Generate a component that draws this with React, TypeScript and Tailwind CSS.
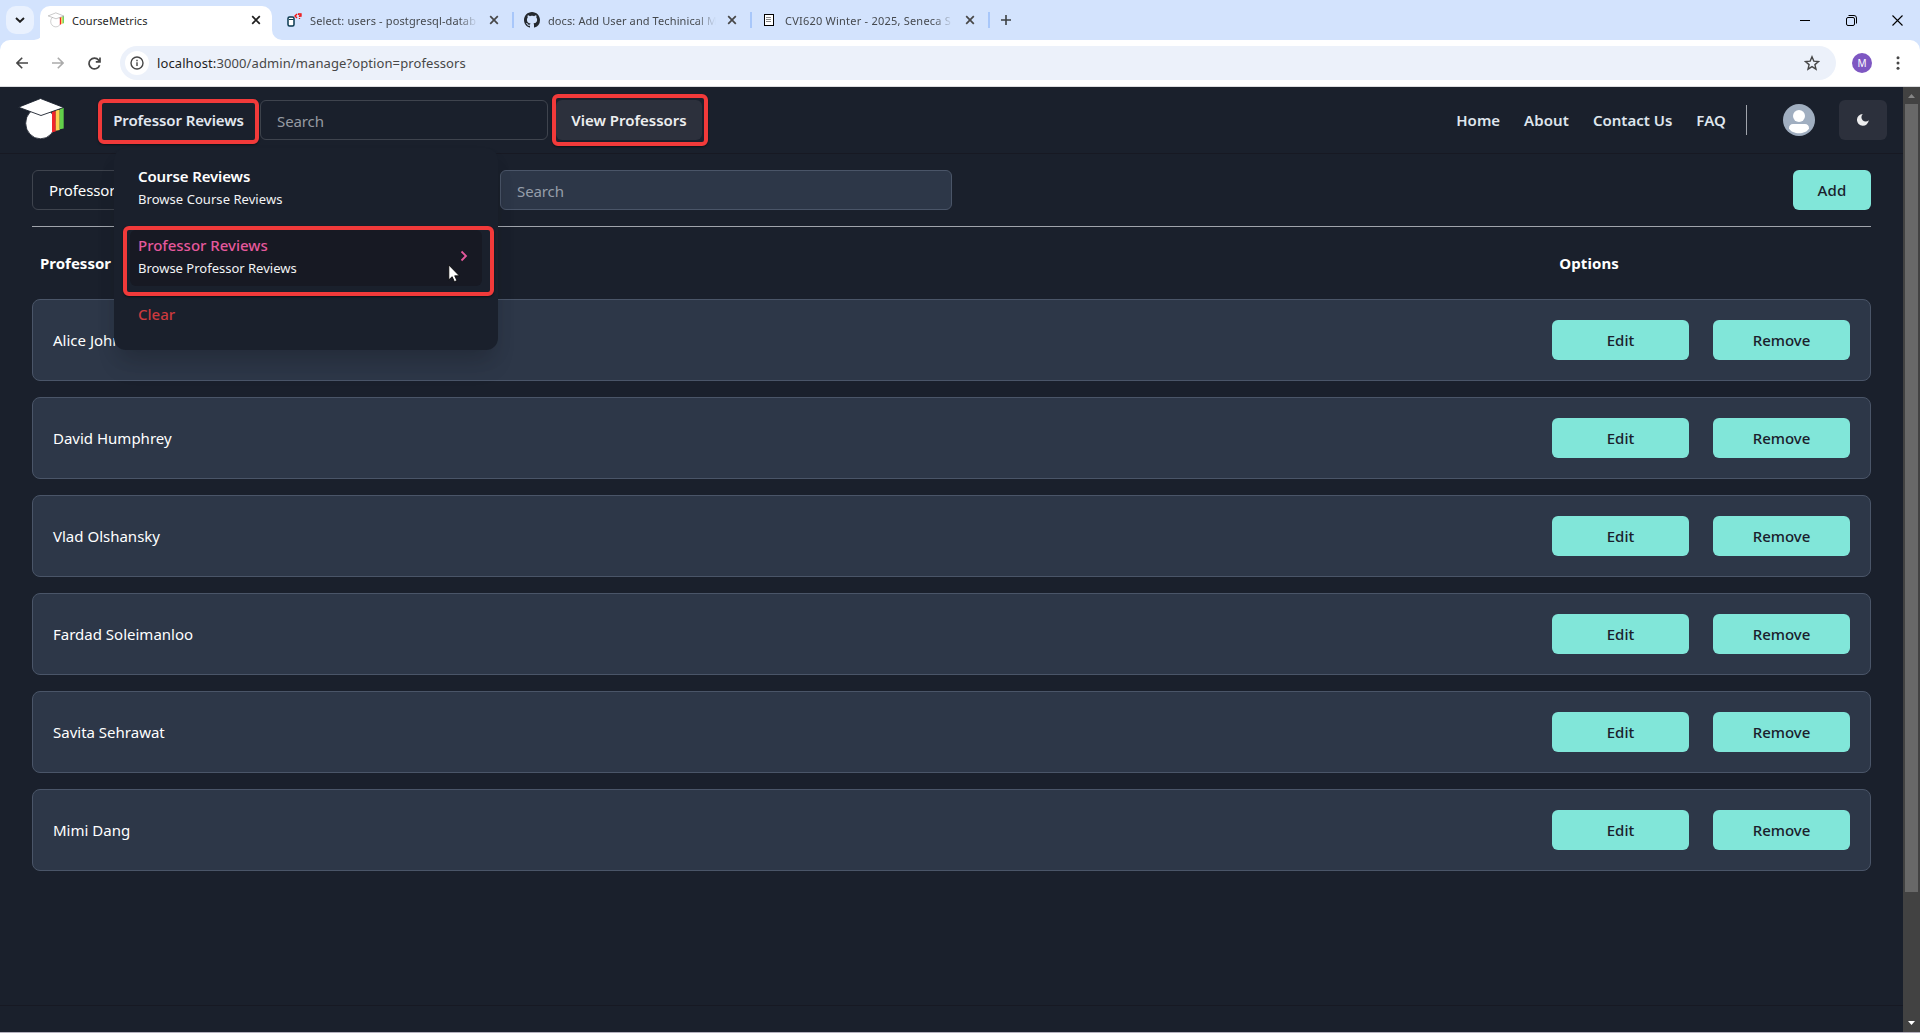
import { type ReactNode } from "react";

const professors = [
  "Alice Johnson",
  "David Humphrey",
  "Vlad Olshansky",
  "Fardad Soleimanloo",
  "Savita Sehrawat",
  "Mimi Dang",
];

function CloseIcon({ className = "" }: { className?: string }) {
  return (
    <svg viewBox="0 0 10 10" className={`h-2.5 w-2.5 shrink-0 ${className}`} fill="none" stroke="currentColor" strokeWidth="1.7">
      <path d="M1.2 1.2 8.8 8.8M8.8 1.2 1.2 8.8" />
    </svg>
  );
}

function CapLogo({ className, outline }: { className: string; outline: string }) {
  return (
    <svg viewBox="0 0 46 42" className={className}>
      <ellipse cx="22.500" cy="25.200" rx="14.800" ry="15.600" fill="#fff" stroke={outline} strokeWidth="0.8" />
      <path d="M34 13h3.700v20.600l-3.700.6z" fill="#f0252b" />
      <path d="M37.700 12h4v20l-4 .8z" fill="#fbd04f" />
      <path d="M41.700 10h4v20.500l-4 .8z" fill="#62d04a" />
      <path d="M.5 9.200 22.500 .5 45.700 9.500 23 17.500z" fill="#fff" stroke={outline} strokeWidth="0.9" />
    </svg>
  );
}

function DatabaseIcon() {
  return (
    <svg viewBox="0 0 16 16" className="h-4 w-4 shrink-0" fill="none">
      <rect x="2" y="5" width="6" height="9" rx="1.500" fill="#fff" stroke="#0b3a50" strokeWidth="1.500" />
      <path d="M3 7.500h4.500" stroke="#0b3a50" />
      <path d="M11 2 9 4l2 2" stroke="#e11" strokeWidth="1.400" />
      <path d="M12.500 3V2H15v2h-1.500v1M13.500 6v1" stroke="#e11" strokeWidth="1.300" />
    </svg>
  );
}

function GithubIcon() {
  return (
    <svg viewBox="0 0 16 16" className="h-4 w-4 shrink-0" fill="#24292f">
      <path d="M8 0C3.580 0 0 3.580 0 8c0 3.540 2.290 6.530 5.470 7.590.4.070.55-.17.55-.38 0-.19-.01-.82-.01-1.490-2.010.37-2.530-.49-2.690-.94-.09-.23-.48-.94-.82-1.130-.28-.15-.68-.52-.01-.53.63-.01 1.080.58 1.230.82.72 1.210 1.870.87 2.330.66.07-.52.28-.87.51-1.070-1.780-.2-3.640-.89-3.640-3.950 0-.87.31-1.590.82-2.150-.08-.2-.36-1.020.08-2.120 0 0 .67-.21 2.200.82.64-.18 1.320-.27 2-.27s1.360.09 2 .27c1.530-1.040 2.200-.82 2.200-.82.44 1.100.16 1.920.08 2.120.51.56.82 1.270.82 2.150 0 3.070-1.870 3.750-3.650 3.950.29.25.54.73.54 1.480 0 1.070-.01 1.930-.01 2.200 0 .21.15.46.55.38A8.010 8.010 0 0 0 16 8c0-4.420-3.580-8-8-8Z" />
    </svg>
  );
}

function DocumentIcon() {
  return (
    <svg viewBox="0 0 12 14" className="h-3.5 w-3 shrink-0" shapeRendering="crispEdges">
      <rect x="1" y="1" width="9" height="11" fill="#fff" stroke="#000" />
      <path d="M3 4.500h5M3 6.500h5M3 8.500h5" stroke="#888" />
    </svg>
  );
}

function InactiveTab({ icon, title, className, titleClass }: { icon: ReactNode; title: string; className: string; titleClass: string }) {
  return (
    <div className={`flex h-full shrink-0 items-center ${className}`}>
      <span className="flex w-4 shrink-0 justify-center">{icon}</span>
      <span
        className={`ml-2 w-[170px] whitespace-nowrap pt-0.5 text-[11px] text-[#45494e] [mask-image:linear-gradient(to_right,#000_148px,transparent_168px)] ${titleClass}`}
      >
        {title}
      </span>
      <CloseIcon className="ml-auto mr-[13px] text-[#474747]" />
      <span className="h-4 w-0.5 bg-[#a8c7fa]" />
    </div>
  );
}

function BrowserChrome() {
  return (
    <div className="shrink-0 bg-[#d3e3fd]">
      <div className="flex h-10 items-center">
        <div className="ml-1.5 flex h-7 w-7 items-center justify-center rounded-[10px] bg-[#e9f1fe]">
          <svg viewBox="0 0 10 6" className="h-1.5 w-2.5" fill="none" stroke="#1f1f1f" strokeWidth="1.900">
            <path d="m1 1 4 3.800L9 1" />
          </svg>
        </div>
        <svg viewBox="0 0 10 10" className="mt-auto -mr-1 h-2.5 w-2.5 shrink-0 fill-white">
          <path d="M0 10A10 10 0 0 0 10 0v10z" />
        </svg>
        <div className="mt-1.5 flex h-[34px] w-[232px] shrink-0 items-center rounded-t-[10px] bg-white pb-1.5">
          <CapLogo className="ml-2 h-4 w-4 shrink-0" outline="#555" />
          <span className="ml-2 pt-0.5 text-[11px] tracking-[0.08px] text-[#1f1f1f]">CourseMetrics</span>
          <CloseIcon className="ml-auto mr-[11px] text-[#1f1f1f]" />
        </div>
        <svg viewBox="0 0 10 10" className="mt-auto h-2.5 w-2.5 shrink-0 fill-white">
          <path d="M10 10A10 10 0 0 1 0 0v10z" />
        </svg>
        <InactiveTab icon={<DatabaseIcon />} title="Select: users - postgresql-datab" className="ml-1 w-[228px]" titleClass="tracking-[0.13px]" />
        <InactiveTab icon={<GithubIcon />} title="docs: Add User and Techinical M" className="ml-2.5 w-[228px]" titleClass="tracking-[0.1px]" />
        <InactiveTab icon={<DocumentIcon />} title="CVI620 Winter - 2025, Seneca S" className="ml-[9px] w-[229px]" titleClass="tracking-[0.22px]" />
        <svg viewBox="0 0 10 10" className="ml-[11px] h-2.5 w-2.5" stroke="#3c4043" strokeWidth="1.600">
          <path d="M5 0v10M0 5h10" />
        </svg>
        <div className="ml-auto mr-[17px] flex items-center text-black">
          <svg viewBox="0 0 10 10" className="h-2.5 w-2.5" stroke="currentColor">
            <path d="M0 5.500h10" />
          </svg>
          <svg viewBox="0 0 11 11" className="ml-9 h-[11px] w-[11px]" fill="none" stroke="currentColor">
            <rect x=".5" y="2.500" width="8" height="8" rx="1.500" />
            <path d="M2.500.5H8A2.500 2.500 0 0 1 10.500 3v5.500" />
          </svg>
          <svg viewBox="0 0 11 11" className="ml-[35px] h-[11px] w-[11px]" stroke="currentColor" strokeWidth="1.100">
            <path d="m.5.5 10 10M10.500.5l-10 10" />
          </svg>
        </div>
      </div>
      <div className="flex h-[47px] items-center rounded-t-[10px] border-b border-[#dcdde0] bg-white">
        <svg viewBox="0 0 12 12" className="ml-4 h-3 w-3" fill="none" stroke="#474747" strokeWidth="1.600">
          <path d="M12 6H1M6.200.8 1 6l5.200 5.200" />
        </svg>
        <svg viewBox="0 0 12 12" className="ml-6 h-3 w-3" fill="none" stroke="#ababab" strokeWidth="1.600">
          <path d="M0 6h11M5.800.8 11 6l-5.200 5.200" />
        </svg>
        <svg viewBox="0 0 13 13" className="ml-6 h-[13px] w-[13px]" fill="none" stroke="#474747" strokeWidth="1.700">
          <path d="M11.600 8.200A5.400 5.400 0 1 1 10.700 3.200L12 4.500M12 .4v4.400H7.800" />
        </svg>
        <div className="ml-[19px] flex h-[34px] w-[1716px] items-center rounded-full bg-[#ecf1fa]">
          <div className="ml-[5px] flex h-6 w-6 items-center justify-center rounded-full bg-white">
            <svg viewBox="0 0 14 14" className="h-3.5 w-3.5" fill="none" stroke="#474747" strokeWidth="1.400">
              <circle cx="7" cy="7" r="6" />
              <path d="M7 6.200V10M7 3.800v1.400" />
            </svg>
          </div>
          <span className="ml-2 pt-px text-[13px] tracking-[0.1px] text-[#474747]">
            <span className="text-[#1f1f1f]">localhost:</span>3000/admin/manage?option=professors
          </span>
          <svg viewBox="0 0 16 16" className="ml-auto mr-4 h-4 w-4" fill="none" stroke="#474747" strokeWidth="1.400">
            <path d="m8 1.800 1.800 4.300 4.700.4-3.600 3.100 1.100 4.600L8 11.700l-4 2.500 1.100-4.600L1.500 6.500l4.700-.4z" />
          </svg>
        </div>
        <div className="ml-4 flex h-5 w-5 items-center justify-center rounded-full bg-[#7e57c2] text-[10px] text-white">M</div>
        <svg viewBox="0 0 4 14" className="ml-6 h-3.5 w-1" fill="#474747">
          <circle cx="2" cy="1.700" r="1.500" />
          <circle cx="2" cy="7" r="1.500" />
          <circle cx="2" cy="12.300" r="1.500" />
        </svg>
      </div>
    </div>
  );
}

function ReviewsMenu() {
  return (
    <div className="absolute left-[34px] top-[49px] z-20 h-[202px] w-96 rounded-xl bg-[#1a202c] shadow-[0_20px_25px_-5px_rgba(0,0,0,0.1),0_10px_20px_-5px_rgba(0,0,0,0.12)]">
      <div className="flex flex-col px-4 pt-4">
        <div className="h-[62px] px-2 font-semibold leading-6 text-white">
          <p className="-tracking-[0.12px]">Course Reviews</p>
          <p className="text-[13px] font-normal leading-[22px] tracking-[0.05px] text-[#f2f3f5]">Browse Course Reviews</p>
        </div>
        <div className="relative mt-1 flex h-14 items-center rounded-md bg-[#171923] px-2">
          <div className="-mt-[5px]">
            <p className="font-medium leading-6 text-[#e5589c]">Professor Reviews</p>
            <p className="text-[13px] leading-[22px] text-[#f2f3f5]">Browse Professor Reviews</p>
          </div>
          <svg viewBox="0 0 8 12" className="-mt-[5px] ml-auto mr-1.5 h-3 w-2" fill="none" stroke="#e5589c" strokeWidth="1.800">
            <path d="m1.500 1.500 4.500 4.500-4.500 4.500" />
          </svg>
          <div className="absolute -left-[7px] -top-1 h-[70px] w-[371px] rounded-md border-4 border-[#f23a3a] shadow-[0_1px_2px_rgba(0,0,0,0.5)]" />
          <svg viewBox="0 0 12 19" className="absolute left-[318px] top-[34px] h-[19px] w-3" fill="#fff" stroke="#000" strokeWidth=".8">
            <path d="M.8 1v14.800l3.400-3.100 2.200 5 2.500-1.100-2.200-4.800h4.600z" />
          </svg>
        </div>
        <div className="mt-4 px-2 font-medium leading-6 text-[#cb3a3e]">Clear</div>
      </div>
    </div>
  );
}

function Header() {
  return (
    <header className="flex h-[67px] shrink-0 items-center border-b border-[#171923] pl-[18px] pr-4">
      <CapLogo className="mb-0.5 h-[42px] w-[46px]" outline="#1a202c" />
      <div className="relative ml-[34px] mt-[3px] flex h-[45px] w-[161px] items-center justify-center rounded-md border-4 border-[#f23a3a] font-semibold text-[#e2e8f0] -tracking-[0.1px] shadow-[0_1px_2px_rgba(0,0,0,0.5)]">
        <span className="-mt-[3px]">Professor Reviews</span>
        <div className="absolute -left-[22px] -top-[4px] font-normal tracking-normal">
          <ReviewsMenu />
        </div>
      </div>
      <div className="ml-px flex h-10 w-[288px] items-center rounded-md border border-[#3f444e] pl-4 pt-0.5 text-[#969aa2] -tracking-[0.1px]">Search</div>
      <div className="ml-1 flex h-[52px] w-[156px] items-center rounded-md border-4 border-[#f23a3a] shadow-[0_1px_2px_rgba(0,0,0,0.5)]">
        <div className="flex h-10 w-[146px] shrink-0 items-center justify-center rounded-md bg-[#2c303c] font-semibold text-[#edeeef]">
          View Professors
        </div>
      </div>
      <nav className="ml-auto flex items-center gap-6 pt-px font-semibold text-[#dfe5ed]">
        <span>Home</span>
        <span className="tracking-[0.1px]">About</span>
        <span>Contact Us</span>
        <span className="tracking-[0.1px]">FAQ</span>
      </nav>
      <span className="ml-5 h-[30px] w-px bg-[#a0a4ac]" />
      <svg viewBox="0 0 32 32" className="ml-9 h-8 w-8">
        <circle cx="16" cy="16" r="16" fill="#a0aec0" />
        <circle cx="16" cy="12" r="6" fill="#fff" />
        <path d="M6 24.500C6 21.500 7.500 20 10 20h12c2.500 0 4 1.500 4 4.500-1.500 3.200-6 4.700-10 4.700s-8.500-1.500-10-4.700Z" fill="#fff" />
      </svg>
      <div className="ml-6 flex h-10 w-12 items-center justify-center rounded-md bg-[#2c303c]">
        <svg viewBox="0 0 24 24" className="h-3 w-3" fill="#ededee">
          <path d="M11.500 0A8 8 0 0 0 23.500 12.500 11.800 11.800 0 1 1 11.500 0Z" />
        </svg>
      </div>
    </header>
  );
}

function ActionButton({ children }: { children: ReactNode }) {
  return (
    <button className="flex h-10 w-[137px] items-center justify-center rounded-md bg-[#81e6d9] font-[550] text-[#1a202c]">{children}</button>
  );
}

function Scrollbar() {
  return (
    <div className="flex w-[17px] shrink-0 flex-col items-center bg-[#424242]">
      <svg viewBox="0 0 17 17" className="h-[17px] w-[17px] shrink-0 fill-[#868686]">
        <path d="M5 11h7L8.500 7z" />
      </svg>
      <div className="h-[788px] w-[13px] bg-[#686868]" />
      <svg viewBox="0 0 17 17" className="mt-auto h-[17px] w-[17px] shrink-0 fill-white">
        <path d="M5 6h7l-3.500 4z" />
      </svg>
    </div>
  );
}

export default function App() {
  return (
    <div className="flex h-[1033px] w-[1920px] flex-col overflow-hidden bg-[#1a202c] font-['Noto_Sans','Open_Sans',sans-serif] text-[15px]">
      <BrowserChrome />
      <div className="flex min-h-0 flex-1 border-b border-[#b3b0bd]">
        <div className="flex min-w-0 flex-1 flex-col">
          <Header />
          <main className="flex-1 px-8 pt-4 text-white">
            <div className="flex h-[57px] items-start border-b border-[#a0a4ac]">
              <div className="flex h-10 w-[450px] items-center rounded-md border border-[#3f444e] pl-4 -tracking-[0.1px]">Professors</div>
              <div className="ml-[18px] flex h-10 w-[452px] items-center rounded-md border border-[#4a5568] bg-[#2d3748] pl-4 pt-0.5 text-[#969eaa] -tracking-[0.1px]">Search</div>
              <button className="ml-auto flex h-10 w-[78px] items-center justify-center rounded-md bg-[#81e6d9] font-[550] text-[#1a202c] tracking-[0.2px]">Add</button>
            </div>
            <div className="flex h-[72px] items-center pl-2 font-bold">
              <span>Professor</span>
              <span className="ml-auto mr-[252px] tracking-[0.1px]">Options</span>
            </div>
            <div className="flex flex-col gap-4">
              {professors.map((name) => (
                <div key={name} className="flex h-[82px] items-center gap-6 rounded-lg border border-[#4a5568] bg-[#2d3748] px-5">
                  <span className="mr-auto">{name}</span>
                  <ActionButton>Edit</ActionButton>
                  <ActionButton>Remove</ActionButton>
                </div>
              ))}
            </div>
          </main>
          <footer className="h-[27px] shrink-0 border-t border-[#171923]" />
        </div>
        <Scrollbar />
      </div>
    </div>
  );
}
